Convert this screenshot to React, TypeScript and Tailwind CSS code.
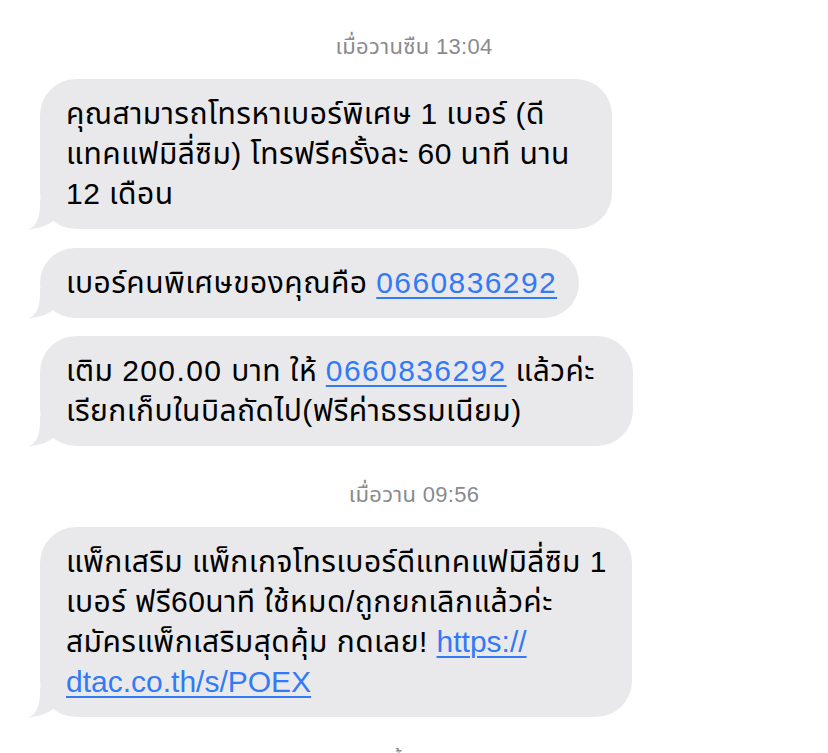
import React from "react";

const FONT = { fontFamily: '"Liberation Sans", "Noto Sans Thai", "Noto Sans", "DejaVu Sans", sans-serif' };

function Tail() {
  return (
    <svg
      className="absolute left-[-12px] bottom-0"
      width="30"
      height="30"
      viewBox="0 0 30 30"
    >
      <path
        d="M0 30 C6 29 11 23 12 8 L12 0 L30 0 L30 22 L25 22 C17 28 8 30 0 30 Z"
        fill="#e9e9eb"
      />
    </svg>
  );
}

function Bubble({ children, className = "" }: { children: React.ReactNode; className?: string }) {
  return (
    <div className={"relative self-start " + className}>
      <Tail />
      <div className="relative rounded-[36px] bg-[#e9e9eb] px-[26px] py-[15px] text-[30px] leading-[40px] tracking-[0.45px] text-black whitespace-nowrap">
        {children}
      </div>
    </div>
  );
}

function Link({ children }: { children: React.ReactNode }) {
  return (
    <span className="text-[#327af6] underline decoration-[2px] underline-offset-[4px] tracking-normal">{children}</span>
  );
}

function Num({ children }: { children: React.ReactNode }) {
  return <span className="tracking-[1.4px]">{children}</span>;
}

function Stamp({ children, className = "" }: { children: React.ReactNode; className?: string }) {
  return (
    <div className={"h-[28px] text-center text-[22px] leading-[28px] tracking-[0.3px] text-[#8a8a8e] " + className}>
      {children}
    </div>
  );
}

export default function App() {
  return (
    <div className="h-[753px] w-full overflow-hidden bg-white" style={FONT}>
      <div className="flex flex-col pl-[40px] pt-[33px]">
        <Stamp className="pr-[40px]">เมื่อวานซืน 13:04</Stamp>
        <Bubble className="mt-[18px] w-[572px]">
          คุณสามารถโทรหาเบอร์พิเศษ 1 เบอร์ (ดี
          <br />
          แทคแฟมิลี่ซิม) โทรฟรีครั้งละ 60 นาที นาน
          <br />
          12 เดือน
        </Bubble>
        <Bubble className="mt-[19px] w-[539px]">
          เบอร์คนพิเศษของคุณคือ <Link><Num>0660836292</Num></Link>
        </Bubble>
        <Bubble className="mt-[18px] w-[593px]">
          เติม <Num>200.00</Num> บาท ให้ <Link><Num>0660836292</Num></Link> แล้วค่ะ
          <br />
          เรียกเก็บในบิลถัดไป(ฟรีค่าธรรมเนียม)
        </Bubble>
        <Stamp className="mt-[35px] pr-[40px]">เมื่อวาน 09:56</Stamp>
        <Bubble className="mt-[18px] w-[592px]">
          แพ็กเสริม แพ็กเกจโทรเบอร์ดีแทคแฟมิลี่ซิม 1
          <br />
          เบอร์ ฟรี60นาที ใช้หมด/ถูกยกเลิกแล้วค่ะ
          <br />
          สมัครแพ็กเสริมสุดคุ้ม กดเลย! <Link>https://</Link>
          <br />
          <Link>dtac.co.th/s/POEX</Link>
        </Bubble>
        <Stamp className="mt-[32px] pr-[40px]">วันนี้ 10:21</Stamp>
      </div>
    </div>
  );
}
